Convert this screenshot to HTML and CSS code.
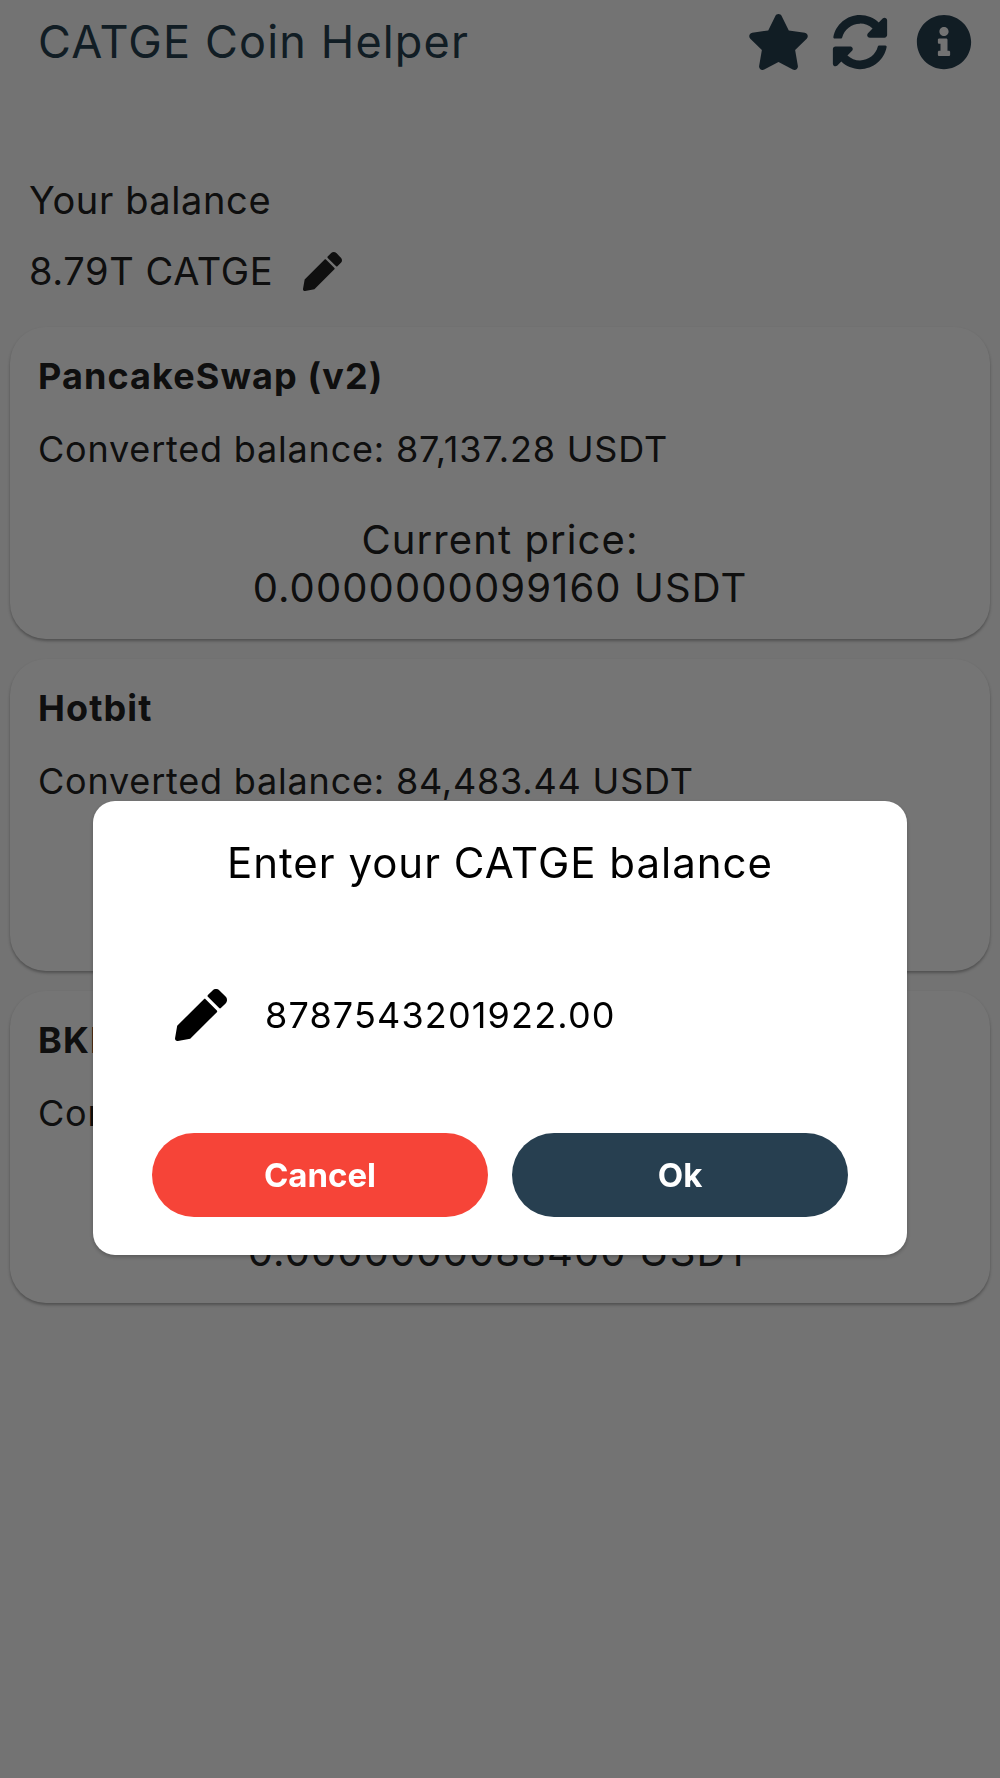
FILE: index.html
```html
<!DOCTYPE html>
<html lang="en">
<head>
  <meta charset="UTF-8">
  <meta name="viewport" content="width=device-width, initial-scale=1">
  <title>CATGE Coin Helper</title>
  <link rel="stylesheet" href="styles.css">
</head>
<body>

  <!-- App bar -->
  <div class="app-bar">
    <div class="app-title">CATGE Coin Helper</div>
    <div class="app-actions">
      <svg class="icon-star" viewBox="0 0 576 512"><path d="M259.3 17.8L194 150.2 47.9 171.5c-26.2 3.8-36.7 36.1-17.7 54.6l105.7 103-25 145.5c-4.5 26.3 23.2 46 46.4 33.7L288 439.6l130.7 68.7c23.2 12.2 50.9-7.4 46.4-33.7l-25-145.5 105.7-103c19-18.5 8.5-50.8-17.7-54.6L382 150.2 316.7 17.8c-11.7-23.6-45.6-23.9-57.4 0z"/></svg>
      <svg class="icon-action" viewBox="0 0 512 512"><path d="M370.72 133.28C339.458 104.008 298.888 87.962 255.848 88c-77.458.068-144.328 53.178-162.791 126.85-1.344 5.363-6.122 9.15-11.651 9.15H24.103c-7.498 0-13.194-6.807-11.807-14.176C33.933 94.924 134.813 8 256 8c66.448 0 126.791 26.136 171.315 68.685L463.03 40.97C478.149 25.851 504 36.559 504 57.941V192c0 13.255-10.745 24-24 24H345.941c-21.382 0-32.09-25.851-16.971-40.971l41.75-41.749zM32 296h134.059c21.382 0 32.09 25.851 16.971 40.971l-41.75 41.75c31.262 29.273 71.835 45.319 114.876 45.28 77.418-.07 144.315-53.144 162.787-126.849 1.344-5.363 6.122-9.15 11.651-9.15h57.304c7.498 0 13.194 6.807 11.807 14.176C478.067 417.076 377.187 504 256 504c-66.448 0-126.791-26.136-171.315-68.685L48.97 471.03C33.851 486.149 8 475.441 8 454.059V320c0-13.255 10.745-24 24-24z"/></svg>
      <svg class="icon-action" viewBox="0 0 512 512"><path d="M256 8C119.043 8 8 119.083 8 256c0 136.997 111.043 248 248 248s248-111.003 248-248C504 119.083 392.957 8 256 8zm0 110c23.196 0 42 18.804 42 42s-18.804 42-42 42-42-18.804-42-42 18.804-42 42-42zm56 254c0 6.627-5.373 12-12 12h-88c-6.627 0-12-5.373-12-12v-24c0-6.627 5.373-12 12-12h12v-64h-12c-6.627 0-12-5.373-12-12v-24c0-6.627 5.373-12 12-12h64c6.627 0 12 5.373 12 12v100h12c6.627 0 12 5.373 12 12v24z"/></svg>
    </div>
  </div>

  <!-- Balance -->
  <div class="balance">
    <div class="balance-label">Your balance</div>
    <div class="balance-row">
      <span>8.79T CATGE</span>
      <svg class="icon-pencil" viewBox="0 0 512 512"><path d="M497.9 142.1l-46.1 46.1c-4.7 4.7-12.3 4.7-17 0l-111-111c-4.7-4.7-4.7-12.3 0-17l46.1-46.1c18.7-18.7 49.1-18.7 67.9 0l60.1 60.1c18.8 18.7 18.8 49.1 0 67.9zM284.2 99.8L21.6 362.4.4 483.9c-2.9 16.4 11.4 30.6 27.8 27.8l121.5-21.3 262.6-262.6c4.7-4.7 4.7-12.3 0-17l-111-111c-4.8-4.7-12.4-4.7-17.1 0z"/></svg>
    </div>
  </div>

  <!-- Exchange cards -->
  <div class="cards">
    <div class="card">
      <div class="card-name">PancakeSwap (v2)</div>
      <div class="card-converted">Converted balance: 87,137.28 USDT</div>
      <div class="card-price">Current price:<br>0.0000000099160 USDT</div>
    </div>
    <div class="card">
      <div class="card-name">Hotbit</div>
      <div class="card-converted">Converted balance: 84,483.44 USDT</div>
      <div class="card-price">Current price:<br>0.0000000096142 USDT</div>
    </div>
    <div class="card">
      <div class="card-name">BKEX</div>
      <div class="card-converted">Converted balance: 77,681.88 USDT</div>
      <div class="card-price">Current price:<br>0.0000000088400 USDT</div>
    </div>
  </div>

  <!-- Balance dialog -->
  <div class="overlay">
    <div class="dialog">
      <div class="dialog-title">Enter your CATGE balance</div>
      <div class="dialog-field">
        <svg class="icon-field" viewBox="0 0 512 512"><path d="M497.9 142.1l-46.1 46.1c-4.7 4.7-12.3 4.7-17 0l-111-111c-4.7-4.7-4.7-12.3 0-17l46.1-46.1c18.7-18.7 49.1-18.7 67.9 0l60.1 60.1c18.8 18.7 18.8 49.1 0 67.9zM284.2 99.8L21.6 362.4.4 483.9c-2.9 16.4 11.4 30.6 27.8 27.8l121.5-21.3 262.6-262.6c4.7-4.7 4.7-12.3 0-17l-111-111c-4.8-4.7-12.4-4.7-17.1 0z"/></svg>
        <span>8787543201922.00</span>
      </div>
      <div class="dialog-buttons">
        <button class="btn btn-cancel">Cancel</button>
        <button class="btn btn-ok">Ok</button>
      </div>
    </div>
  </div>

</body>
</html>
```

FILE: styles.css
```css
/* Reset and page */
* {
  box-sizing: border-box;
  margin: 0;
  padding: 0;
}

body {
  font-family: Inter, "Noto Sans", sans-serif;
  background-color: #fafafa;
  color: #212121;
  height: 1778px;
  overflow: hidden;
  font-size: 36px;
  letter-spacing: 0.8px;
}

/* App bar */
.app-bar {
  display: flex;
  justify-content: space-between;
  align-items: center;
  height: 83px;
  padding: 0 28px 0 38px;
}

.app-title {
  font-size: 45px;
  font-weight: 400;
  color: #273f50;
  letter-spacing: 1.15px;
}

.app-actions {
  display: flex;
  align-items: center;
  gap: 28px;
  fill: #273f50;
}

.icon-star {
  width: 63px;
  height: 56px;
  margin-right: -6px;
}

.icon-action {
  width: 56px;
  height: 56px;
}

/* Balance */
.balance {
  padding: 95px 29px 0;
  font-size: 38px;
  letter-spacing: 0.6px;
}

.balance-label {
  line-height: 44px;
}

.balance-row {
  display: flex;
  align-items: center;
  gap: 30px;
  margin-top: 27px;
  line-height: 44px;
}

.icon-pencil {
  width: 39px;
  height: 39px;
  fill: #212121;
}

/* Cards */
.cards {
  display: flex;
  flex-direction: column;
  gap: 20px;
  padding: 34px 10px 0;
}

.card {
  background-color: #fff;
  border-radius: 36px;
  height: 312px;
  padding: 27px 28px 0;
  box-shadow: 0 2px 3px rgba(0, 0, 0, 0.3);
}

.card-name {
  font-weight: 700;
  line-height: 44px;
  letter-spacing: 1.1px;
}

.card-converted {
  margin-top: 29px;
  line-height: 44px;
}

.card-price {
  margin-top: 45px;
  line-height: 48px;
  text-align: center;
  font-size: 40px;
  letter-spacing: 1.1px;
}

/* Dialog */
.overlay {
  position: fixed;
  top: 0;
  left: 0;
  right: 0;
  bottom: 0;
  background-color: rgba(0, 0, 0, 0.54);
  padding: 801px 93px 0;
}

.dialog {
  background-color: #fff;
  border-radius: 22px;
  height: 454px;
  padding: 35px 59px 0;
  color: #000;
  box-shadow: 0 2px 4px rgba(0, 0, 0, 0.25);
}

.dialog-title {
  font-size: 42px;
  line-height: 54px;
  text-align: center;
  letter-spacing: 1px;
}

.dialog-field {
  display: flex;
  align-items: center;
  gap: 38px;
  height: 56px;
  margin-top: 97px;
  padding-left: 23px;
  letter-spacing: 1.15px;
}

.icon-field {
  width: 52px;
  height: 52px;
  fill: #000;
}

.dialog-buttons {
  display: flex;
  gap: 24px;
  margin-top: 90px;
}

.btn {
  flex: 1;
  height: 84px;
  border: none;
  border-radius: 42px;
  color: #fff;
  font-family: Inter, "Noto Sans", sans-serif;
  font-size: 33px;
  font-weight: 700;
}

.btn-cancel {
  background-color: #f64438;
}

.btn-ok {
  background-color: #273f50;
}
```
